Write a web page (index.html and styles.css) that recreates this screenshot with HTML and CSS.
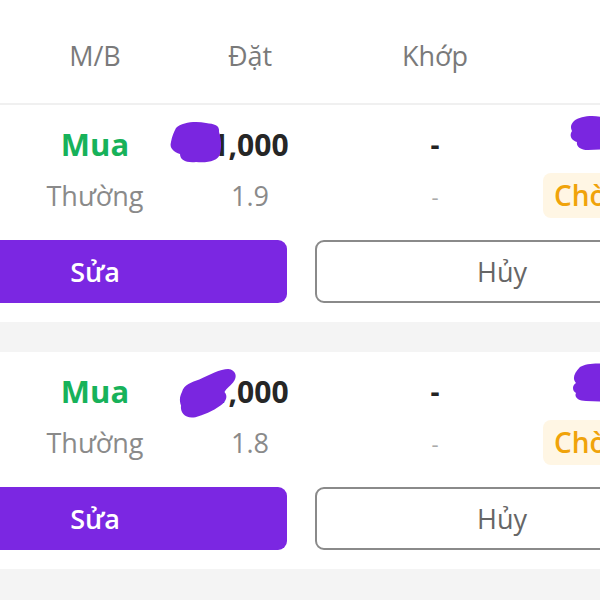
FILE: index.html
```html
<!DOCTYPE html>
<html lang="vi">
<head>
<meta charset="utf-8">
<link rel="stylesheet" href="styles.css">
</head>
<body>
<div class="page">
  <div class="header grid">
    <div class="cell">M/B</div>
    <div class="cell">Đặt</div>
    <div class="cell">Khớp</div>
    <div class="cell"></div>
  </div>

  <div class="card">
    <div class="grid row1">
      <div class="cell buy">Mua</div>
      <div class="cell qty"><span class="num">1,000</span>
        <svg class="blot blot-a" viewBox="0 0 56 44"><path d="M8 8 C14 2 28 1 38 3 C46 4 52 5 51 12 C53 18 54 26 52 34 C50 41 40 43 28 42 C18 43 12 40 12 34 C6 32 1 28 3 22 C4 16 6 12 8 8 Z" fill="#7a26e0"/></svg>
      </div>
      <div class="cell dash">-</div>
      <div class="cell status">
        <svg class="blot blot-s" viewBox="0 0 40 36"><path d="M6 6 C12 1 24 0 34 2 L40 2 L40 34 L20 35 C12 35 8 31 9 27 C3 25 1 20 4 16 C2 12 3 9 6 6 Z" fill="#7a26e0"/></svg>
      </div>
    </div>
    <div class="grid row2">
      <div class="cell sub">Thường</div>
      <div class="cell sub">1.9</div>
      <div class="cell sub dim">-</div>
      <div class="cell status"><span class="badge">Chờ</span></div>
    </div>
    <div class="actions">
      <button class="btn btn-edit">Sửa</button>
      <button class="btn btn-cancel">Hủy</button>
    </div>
  </div>

  <div class="gap"></div>

  <div class="card">
    <div class="grid row1">
      <div class="cell buy">Mua</div>
      <div class="cell qty"><span class="num">1,000</span>
        <svg class="blot blot-b" viewBox="0 0 62 56"><path d="M4 26 C6 18 14 16 22 13 C32 8 44 2 52 2 C60 3 62 10 57 16 C54 20 50 22 48 26 C52 30 50 36 44 40 C36 46 26 50 18 52 C8 54 2 48 3 40 C1 34 2 30 4 26 Z" fill="#7a26e0"/></svg>
      </div>
      <div class="cell dash">-</div>
      <div class="cell status">
        <svg class="blot blot-t" viewBox="0 0 40 40"><path d="M10 4 C16 0 28 0 40 1 L40 39 L16 38 C8 38 4 34 6 30 C2 28 2 22 6 20 C2 16 4 10 10 4 Z" fill="#7a26e0"/></svg>
      </div>
    </div>
    <div class="grid row2">
      <div class="cell sub">Thường</div>
      <div class="cell sub">1.8</div>
      <div class="cell sub dim">-</div>
      <div class="cell status"><span class="badge">Chờ</span></div>
    </div>
    <div class="actions">
      <button class="btn btn-edit">Sửa</button>
      <button class="btn btn-cancel">Hủy</button>
    </div>
  </div>

  <div class="gap tail"></div>
</div>
</body>
</html>
```

FILE: styles.css
```css
html, body {
  margin: 0;
  padding: 0;
  background: #f4f4f4;
  overflow: hidden;
  width: 600px;
  height: 600px;
}
.page {
  width: 600px;
  font-family: "Open Sans", "Noto Sans", sans-serif;
  overflow: hidden;
}
.grid {
  display: grid;
  grid-template-columns: 150px 160px 210px 80px;
  padding-left: 20px;
  width: 620px;
}
.cell {
  display: flex;
  align-items: center;
  justify-content: center;
  white-space: nowrap;
  position: relative;
}
.header {
  background: #fff;
  height: 105px;
  padding-top: 8px;
  border-bottom: 2px solid #f0f0f0;
  color: #7a7a7a;
  font-size: 27px;
  box-sizing: border-box;
  align-items: center;
}
.card {
  background: #fff;
  padding: 18px 0 19px;
  height: 217px;
  box-sizing: border-box;
}
.row1 {
  height: 40px;
}
.row2 {
  height: 40px;
  margin-top: 10px;
}
.buy {
  color: #17b25a;
  font-weight: 700;
  font-size: 31px;
}
.qty {
  color: #262626;
  font-weight: 700;
  font-size: 30px;
}
.dash {
  color: #222;
  font-weight: 700;
  font-size: 28px;
}
.sub {
  color: #8a8a8a;
  font-size: 27px;
}
.dim {
  color: #aaa;
  font-size: 22px;
}
.status {
  justify-content: flex-start;
  padding-left: 3px;
  overflow: visible;
}
.badge {
  display: inline-block;
  background: #fff6e4;
  color: #f0a30a;
  font-weight: 600;
  font-size: 28px;
  line-height: 45px;
  height: 45px;
  padding: 0 11px;
  border-radius: 8px 0 0 8px;
}
.blot {
  position: absolute;
}
.blot-a {
  left: -2px;
  top: -3px;
  width: 56px;
  height: 44px;
}
.blot-b {
  left: 8px;
  top: -3px;
  width: 60px;
  height: 54px;
}
.blot-s {
  left: 28px;
  top: -8px;
  width: 40px;
  height: 36px;
}
.blot-t {
  left: 30px;
  top: -7px;
  width: 40px;
  height: 40px;
}
.actions {
  display: flex;
  gap: 28px;
  margin-top: 27px;
  margin-left: -97px;
  width: 800px;
}
.btn {
  width: 384px;
  height: 63px;
  border-radius: 9px;
  font-family: "Open Sans", "Noto Sans", sans-serif;
  font-size: 27px;
  box-sizing: border-box;
  padding: 0;
}
.btn-edit {
  background: #7b27e2;
  color: #fff;
  border: none;
  font-weight: 600;
}
.btn-cancel {
  background: #fff;
  color: #666;
  border: 2px solid #8a8a8a;
  font-weight: 400;
  width: 374px;
}
.gap {
  height: 30px;
  background: #f4f4f4;
}
.tail {
  height: 40px;
}
```
